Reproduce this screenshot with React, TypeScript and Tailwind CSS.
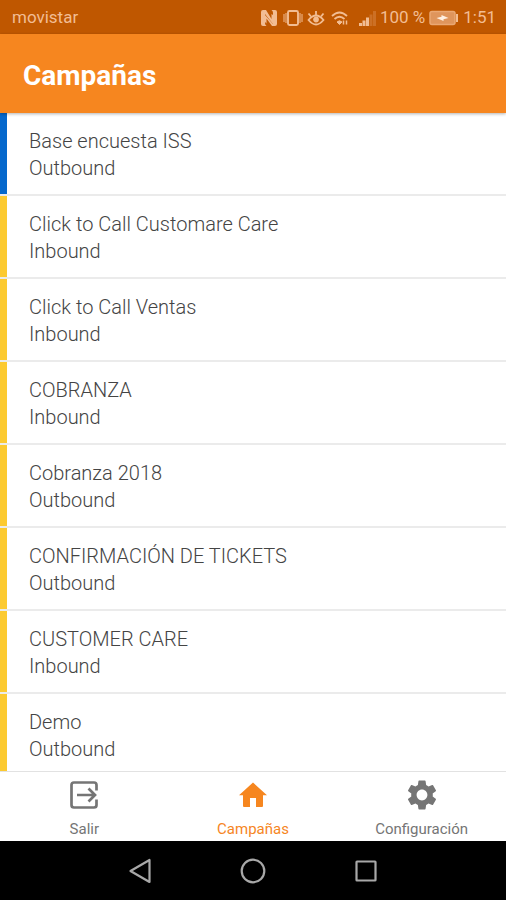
import React, { useState } from 'react';
import { MdSettings } from 'react-icons/md';

type Direction = 'Inbound' | 'Outbound';

interface Campaign {
  name: string;
  direction: Direction;
  active?: boolean;
}

const CAMPAIGNS: Campaign[] = [
  { name: 'Base encuesta ISS', direction: 'Outbound', active: true },
  { name: 'Click to Call Customare Care', direction: 'Inbound' },
  { name: 'Click to Call Ventas', direction: 'Inbound' },
  { name: 'COBRANZA', direction: 'Inbound' },
  { name: 'Cobranza 2018', direction: 'Outbound' },
  { name: 'CONFIRMACIÓN DE TICKETS', direction: 'Outbound' },
  { name: 'CUSTOMER CARE', direction: 'Inbound' },
  { name: 'Demo', direction: 'Outbound' },
];

const ExitIcon = () => (
  <svg viewBox="0 0 28 28" className="w-7 h-7" fill="none" stroke="currentColor" strokeWidth="2.7">
    <path d="M26.500 9.500V4Q26.500 1.500 24 1.500H4Q1.500 1.500 1.500 4v20Q1.500 26.500 4 26.500h20Q26.500 26.500 26.500 24v-5.500" />
    <path d="M7 14h17.500M18.500 7.500 25 14l-6.500 6.500" />
  </svg>
);

const HomeIcon = () => (
  <svg viewBox="0 0 28 28" className="w-7 h-7" fill="currentColor">
    <path d="M14 1.500 0 14.200h4V25q0 1 1 1h6v-9h6v9h6q1 0 1-1V14.200h4z" />
  </svg>
);

const TABS = [
  { id: 'exit', label: 'Salir', icon: <ExitIcon /> },
  { id: 'campaigns', label: 'Campañas', icon: <HomeIcon /> },
  { id: 'settings', label: 'Configuración', icon: <MdSettings className="w-9 h-9 shrink-0" /> },
];

const StatusBar = () => (
  <div className="h-[34px] shrink-0 flex items-center justify-between pl-3 pr-2.5 pt-0.5 bg-[#bf5700] text-[#f2bd93] text-[17px]">
    <span>movistar</span>
    <div className="flex items-center gap-1">
      {/* NFC */}
      <svg viewBox="0 0 16 18" className="w-4 h-[18px] mr-0.5" fill="currentColor">
        <path d="M0 3Q0 1 2 1h3l5.500 9V5l1.500 1v9L4 5v9q0 2 1.500 3H2q-2 0-2-2z" />
        <path d="M16 15q0 2-2 2h-3L5.500 9.500v5L4 13V6l8 9V4q0-2-1.500-3H14q2 0 2 2z" />
      </svg>
      {/* Vibrate */}
      <svg viewBox="0 0 20 18" className="w-5 h-[18px]" fill="none" stroke="currentColor" strokeWidth="1.900">
        <rect x="5" y="2" width="10" height="14" rx="1.500" />
        <path d="M1 5v8M3 4v10M17 4v10M19 5v8" strokeWidth="1" />
      </svg>
      {/* Eye comfort */}
      <svg viewBox="0 0 18 18" className="w-[18px] h-[18px]" fill="none" stroke="currentColor" strokeWidth="1.800">
        <path d="M1.500 11Q9 2 16.500 11Q9 20 1.500 11z" />
        <circle cx="9" cy="10.500" r="2" fill="currentColor" />
        <path d="M9 6V2M4 7.500 1.500 4.500M14 7.500 16.500 4.500" />
      </svg>
      {/* Wi-Fi */}
      <svg viewBox="0 0 18 18" className="w-[18px] h-[18px] ml-0.5 mr-1.5" fill="none" stroke="currentColor" strokeWidth="1.800">
        <path d="M1 7Q8.500 0 16 7" />
        <path d="M3.500 10Q8.500 5.500 13.500 10" />
        <path d="M6 13Q8.500 10.500 11 13l-2.500 2.500z" fill="currentColor" strokeWidth="1" />
        <path d="M12.500 11.500v4M15.500 15.500v-4" strokeWidth="1.500" />
      </svg>
      {/* Signal */}
      <svg viewBox="0 0 17 17" className="w-[17px] h-[17px]" fill="currentColor">
        <path d="M0 13h3v3H0zM3.500 10.500h3V16h-3zM7 7.500h3V16H7z" />
        <path d="M10.500 4.500h3V16h-3zM14 1h3v15h-3z" opacity="0.250" />
      </svg>
      <span>100 %</span>
      {/* Battery */}
      <svg viewBox="0 0 30 16" className="w-[30px] h-4" fill="none" stroke="currentColor">
        <rect x="1" y="1.500" width="25" height="13" rx="2" fill="#df955c" stroke="#eaa873" strokeWidth="1.500" />
        <path d="M28 4v8" strokeWidth="2" />
        <path d="M7.500 8 12.500 6.800V5L19.500 8 14.500 9.200V11z" fill="#fff0e2" stroke="none" />
      </svg>
      <span>1:51</span>
    </div>
  </div>
);

const SystemNav = () => (
  <div className="h-[59px] shrink-0 flex items-center justify-center gap-[88px] bg-black text-[#a8a8a8]">
    <button type="button" aria-label="Back">
      <svg viewBox="0 0 24 26" className="w-6 h-[26px]" fill="none" stroke="currentColor" strokeWidth="2.200" strokeLinejoin="round">
        <path d="M21.500 2v22L2.500 13z" />
      </svg>
    </button>
    <button type="button" aria-label="Home">
      <svg viewBox="0 0 26 26" className="w-[26px] h-[26px]" fill="none" stroke="currentColor" strokeWidth="2.200">
        <circle cx="13" cy="13" r="11.300" />
      </svg>
    </button>
    <button type="button" aria-label="Recent apps">
      <svg viewBox="0 0 24 24" className="w-6 h-6" fill="none" stroke="currentColor" strokeWidth="2.200">
        <rect x="2.500" y="2.500" width="19" height="19" rx="0.500" />
      </svg>
    </button>
  </div>
);

export default function App() {
  const [tab, setTab] = useState('campaigns');

  return (
    <div className="h-screen flex flex-col bg-white font-[Roboto,sans-serif]">
      <StatusBar />

      {/* Header */}
      <header className="relative z-10 h-[79px] shrink-0 flex items-center px-[23px] pt-1 bg-[#f6861f] shadow-[0_1px_3px_rgba(0,0,0,0.3)]">
        <h1 className="text-[28px] font-bold text-white">Campañas</h1>
      </header>

      {/* Campaign list */}
      <main className="flex-1 min-h-0 overflow-hidden">
        <ul>
          {CAMPAIGNS.map((c) => (
            <li key={c.name} className="border-b-2 border-[#ebebeb]">
              <button
                type="button"
                className={`w-full text-left border-l-[7px] pl-[22px] pr-4 pt-[15px] pb-3 text-[20px] leading-[27px] font-light text-[#444444] ${
                  c.active ? 'border-[#0568cc]' : 'border-[#fcca30]'
                }`}
              >
                <span className="block truncate">{c.name}</span>
                <span className="block">{c.direction}</span>
              </button>
            </li>
          ))}
        </ul>
      </main>

      {/* Tabs */}
      <nav className="h-[70px] shrink-0 grid grid-cols-3 border-t border-[#e2e2e2] bg-white">
        {TABS.map((t) => (
          <button
            key={t.id}
            type="button"
            onClick={() => setTab(t.id)}
            className={`flex flex-col items-center pt-[7px] text-[15px] leading-5 ${
              tab === t.id ? 'text-[#f6861f]' : 'text-[#757575]'
            }`}
          >
            <span className="h-8 flex items-center justify-center">{t.icon}</span>
            <span className="mt-2">{t.label}</span>
          </button>
        ))}
      </nav>

      <SystemNav />
    </div>
  );
}
